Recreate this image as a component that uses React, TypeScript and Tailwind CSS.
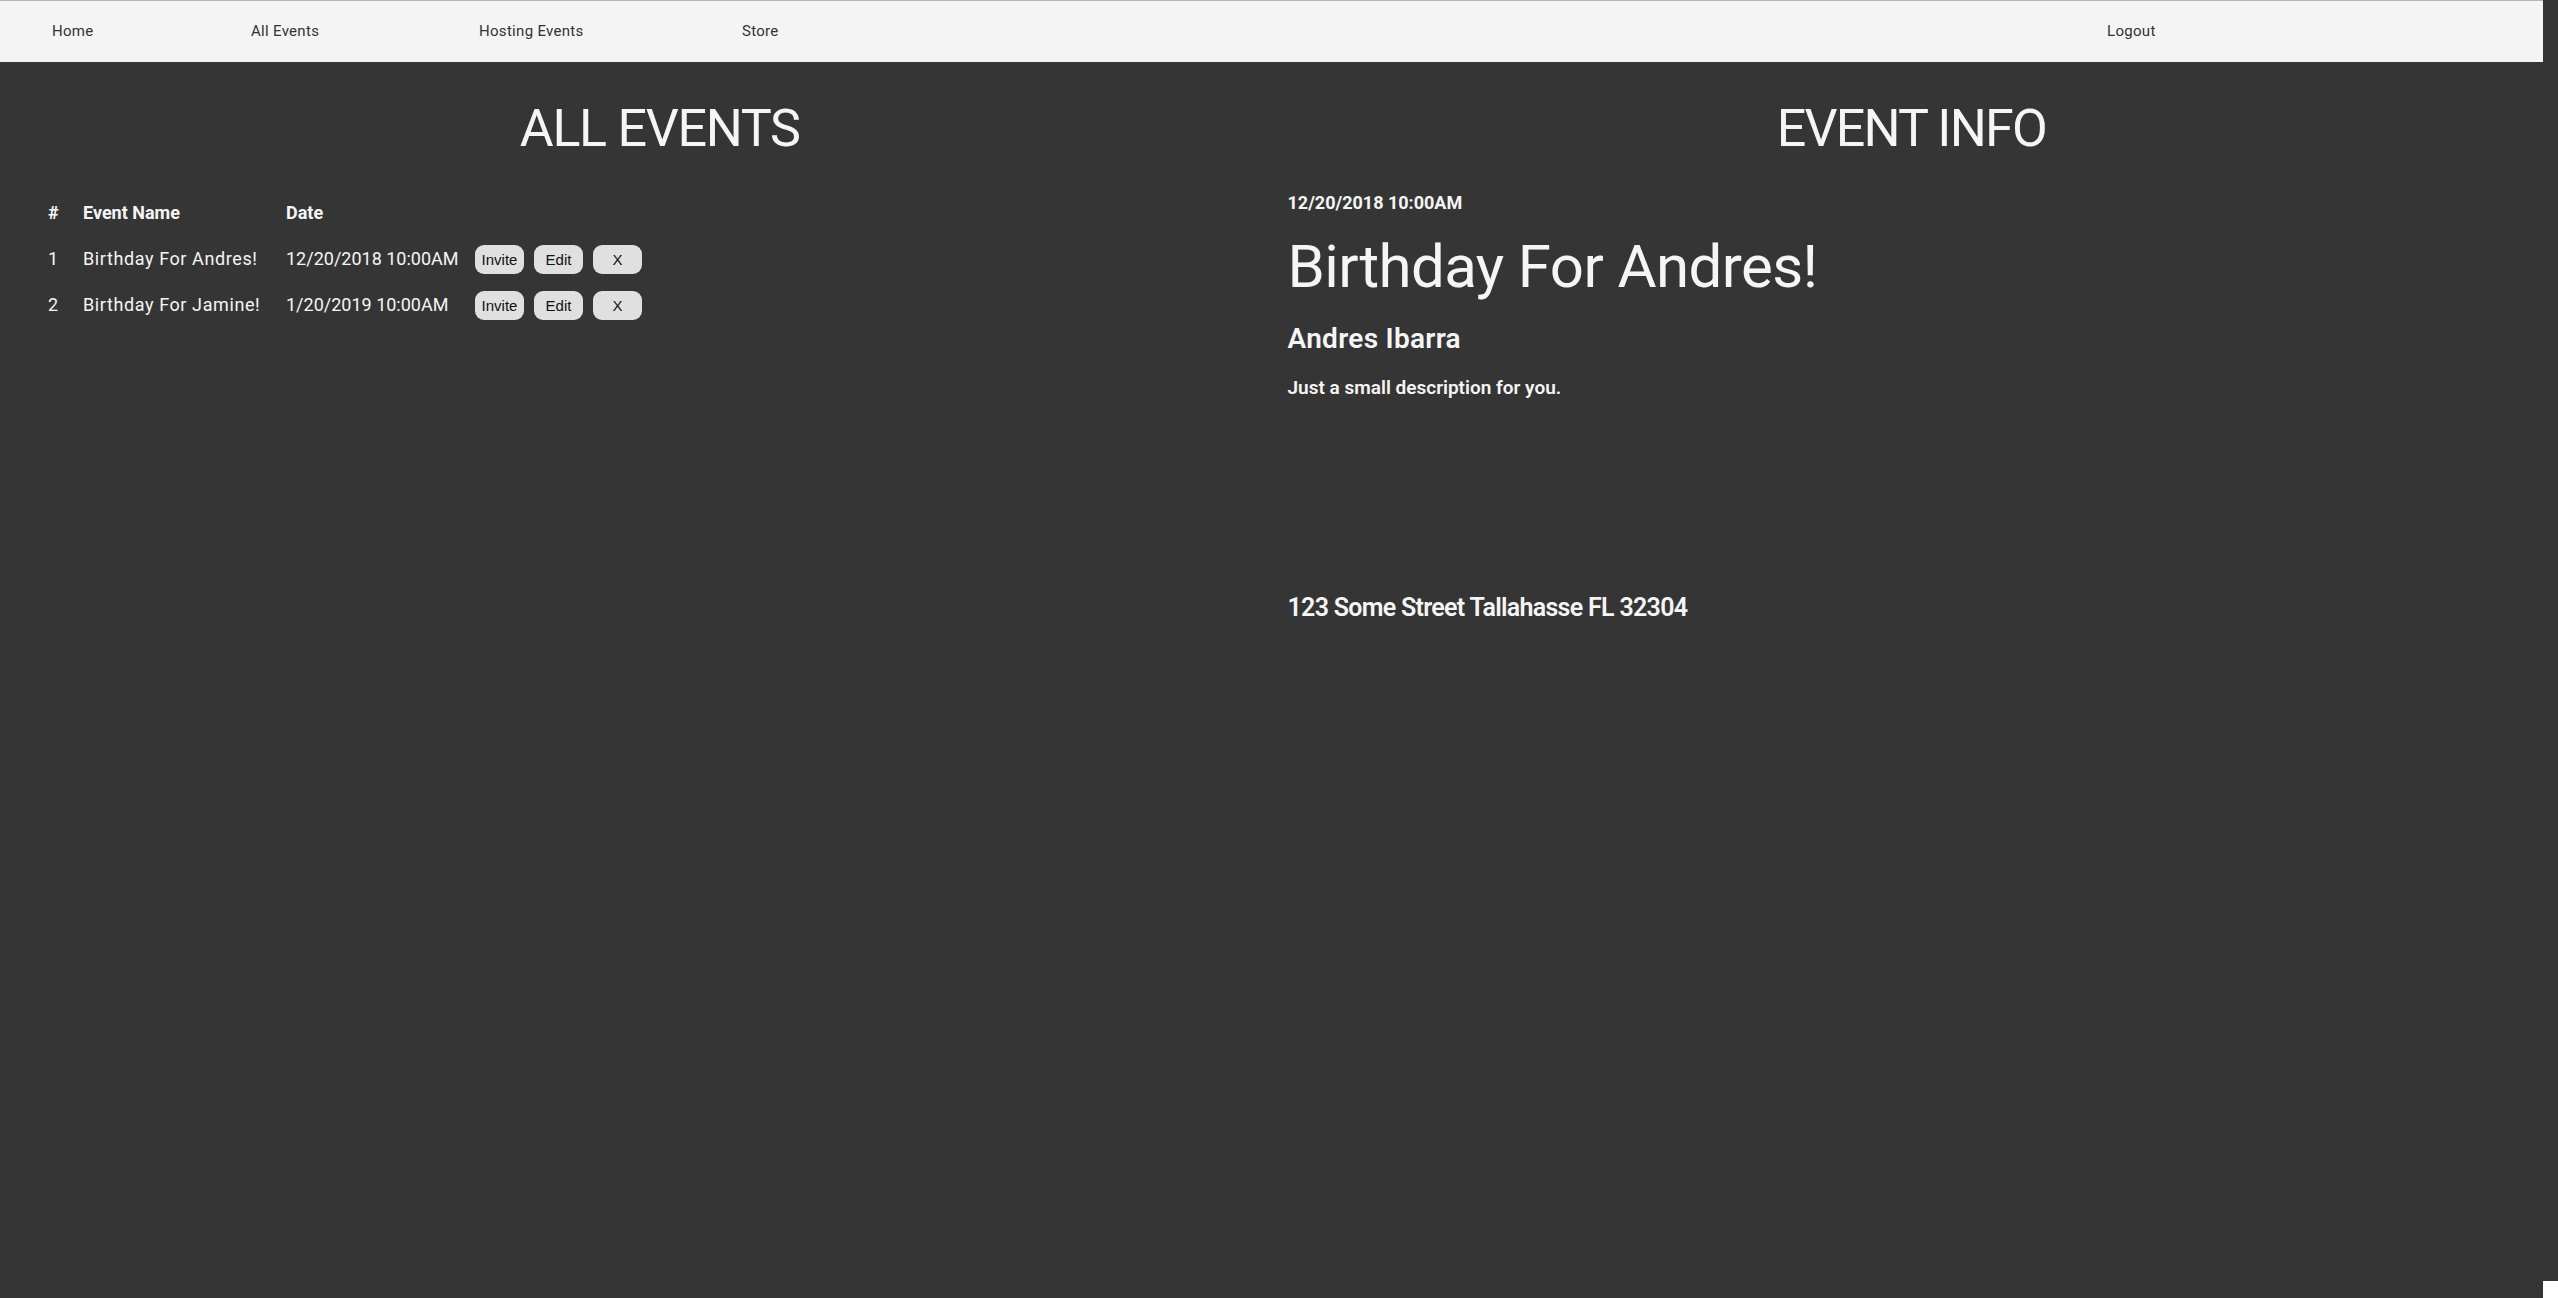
const font = "font-['Roboto',sans-serif]";

const events = [
  { id: 1, name: "Birthday For Andres!", date: "12/20/2018 10:00AM" },
  { id: 2, name: "Birthday For Jamine!", date: "1/20/2019 10:00AM" },
];

const NavBar = () => (
  <nav className="h-[62px] border-t border-[#b3b3b3] bg-[#f4f4f4] flex items-center text-[15px] text-[#333333] tracking-[0.3px]">
    <div className="flex pl-[52px]">
      <a className="w-[199px]">Home</a>
      <a className="w-[228px]">All Events</a>
      <a className="w-[263px]">Hosting Events</a>
      <a>Store</a>
    </div>
    <div className="flex-1" />
    <div className="w-[436px]">
      <a>Logout</a>
    </div>
  </nav>
);

const RowButton = ({ label }: { label: string }) => (
  <button className="w-[49px] h-[29px] rounded-[9px] bg-[#e0e0e0] text-[15px] text-[#111111] font-['Liberation_Sans',sans-serif]">
    {label}
  </button>
);

const AllEvents = () => (
  <section className="pl-[48px]">
    <h1 className="mt-[41px] text-[52px] leading-none text-center tracking-[-1.3px]">ALL EVENTS</h1>

    {/* Table */}
    <div className="mt-[35px] text-[18px] leading-none">
      <div className="flex items-center h-[46px] font-bold">
        <div className="w-[35px]">#</div>
        <div className="w-[203px]">Event Name</div>
        <div className="w-[189px]">Date</div>
      </div>
      {events.map((ev) => (
        <div key={ev.id} className="flex items-center h-[46px]">
          <div className="w-[35px]">{ev.id}</div>
          <div className="w-[203px] tracking-[0.6px]">{ev.name}</div>
          <div className="w-[189px]">{ev.date}</div>
          <div className="flex gap-[10px]">
            <RowButton label="Invite" />
            <RowButton label="Edit" />
            <RowButton label="X" />
          </div>
        </div>
      ))}
    </div>
  </section>
);

const EventInfo = () => (
  <section className="pl-[16px] pr-[8px] flex flex-col leading-none">
    <h1 className="mt-[41px] text-[52px] text-center tracking-[-1.8px]">EVENT INFO</h1>
    <h5 className="mt-[39px] text-[18px] font-bold">12/20/2018 10:00AM</h5>
    <h2 className="mt-[25px] text-[60px] tracking-[-0.6px]">Birthday For Andres!</h2>
    <h3 className="mt-[28px] text-[28px] font-semibold tracking-[0.3px]">Andres Ibarra</h3>
    <p className="mt-[25px] text-[19px] font-semibold">Just a small description for you.</p>
    <p className="mt-[198px] text-[25px] font-semibold tracking-[-0.7px]">123 Some Street Tallahasse FL 32304</p>
  </section>
);

export default function App() {
  return (
    <div className={`${font} flex h-screen w-full bg-[#353535] text-[#f5f5f5] overflow-hidden`}>
      <main className="flex-1 flex flex-col">
        <NavBar />
        <div className="grid grid-cols-2">
          <AllEvents />
          <EventInfo />
        </div>
      </main>
      <div className="w-[15px] flex flex-col">
        <div className="flex-1" />
        <div className="h-[17px] bg-white" />
      </div>
    </div>
  );
}
